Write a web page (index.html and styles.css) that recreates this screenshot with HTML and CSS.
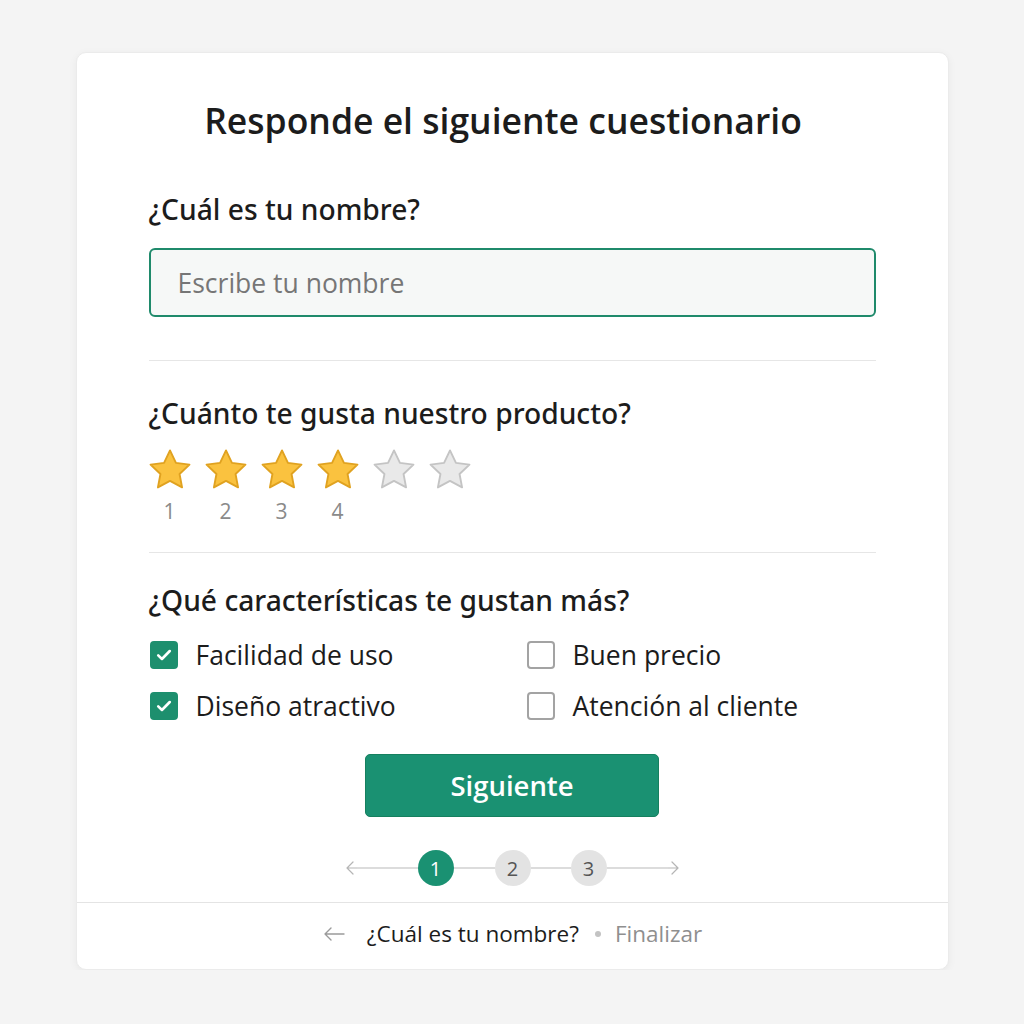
FILE: index.html
```html
<!DOCTYPE html>
<html lang="es">
<head>
<meta charset="utf-8">
<link rel="stylesheet" href="styles.css">
</head>
<body>
<div class="card">
  <div class="content">
    <h1 class="title">Responde el siguiente cuestionario</h1>

    <h2 class="question q1">¿Cuál es tu nombre?</h2>
    <div class="input">Escribe tu nombre</div>

    <div class="divider d1"></div>

    <h2 class="question q2">¿Cuánto te gusta nuestro producto?</h2>
    <div class="stars">
      <div class="star-item">
        <svg class="star on" viewBox="0 0 24 24"><path d="M12 2.6l2.85 5.95 6.5.85-4.77 4.5 1.22 6.45L12 17.2l-5.8 3.15 1.22-6.45L2.65 9.4l6.5-.85z"/></svg>
        <span class="num">1</span>
      </div>
      <div class="star-item">
        <svg class="star on" viewBox="0 0 24 24"><path d="M12 2.6l2.85 5.95 6.5.85-4.77 4.5 1.22 6.45L12 17.2l-5.8 3.15 1.22-6.45L2.65 9.4l6.5-.85z"/></svg>
        <span class="num">2</span>
      </div>
      <div class="star-item">
        <svg class="star on" viewBox="0 0 24 24"><path d="M12 2.6l2.85 5.95 6.5.85-4.77 4.5 1.22 6.45L12 17.2l-5.8 3.15 1.22-6.45L2.65 9.4l6.5-.85z"/></svg>
        <span class="num">3</span>
      </div>
      <div class="star-item">
        <svg class="star on" viewBox="0 0 24 24"><path d="M12 2.6l2.85 5.95 6.5.85-4.77 4.5 1.22 6.45L12 17.2l-5.8 3.15 1.22-6.45L2.65 9.4l6.5-.85z"/></svg>
        <span class="num">4</span>
      </div>
      <div class="star-item">
        <svg class="star off" viewBox="0 0 24 24"><path d="M12 2.6l2.85 5.95 6.5.85-4.77 4.5 1.22 6.45L12 17.2l-5.8 3.15 1.22-6.45L2.65 9.4l6.5-.85z"/></svg>
        <span class="num"></span>
      </div>
      <div class="star-item">
        <svg class="star off" viewBox="0 0 24 24"><path d="M12 2.6l2.85 5.95 6.5.85-4.77 4.5 1.22 6.45L12 17.2l-5.8 3.15 1.22-6.45L2.65 9.4l6.5-.85z"/></svg>
        <span class="num"></span>
      </div>
    </div>

    <div class="divider d2"></div>

    <h2 class="question q3">¿Qué características te gustan más?</h2>
    <div class="options">
      <div class="option">
        <span class="box checked"><svg viewBox="0 0 16 16"><path d="M3.8 8.3l2.7 2.6 5.7-5.8"/></svg></span>
        <span class="label">Facilidad de uso</span>
      </div>
      <div class="option">
        <span class="box"></span>
        <span class="label">Buen precio</span>
      </div>
      <div class="option">
        <span class="box checked"><svg viewBox="0 0 16 16"><path d="M3.8 8.3l2.7 2.6 5.7-5.8"/></svg></span>
        <span class="label">Diseño atractivo</span>
      </div>
      <div class="option">
        <span class="box"></span>
        <span class="label">Atención al cliente</span>
      </div>
    </div>

    <div class="button-row">
      <button class="btn">Siguiente</button>
    </div>

    <div class="stepper">
      <svg class="chev" viewBox="0 0 12 20"><path d="M8 4L2 10l6 6M2 10h10"/></svg>
      <span class="seg s1"></span>
      <span class="step active">1</span>
      <span class="seg s2"></span>
      <span class="step">2</span>
      <span class="seg s3"></span>
      <span class="step">3</span>
      <span class="seg s4"></span>
      <svg class="chev" viewBox="0 0 12 20"><path d="M4 4l6 6-6 6M0 10h10"/></svg>
    </div>
  </div>

  <div class="footer">
    <svg class="back" viewBox="0 0 24 16"><path d="M22 8H3M9 2L3 8l6 6"/></svg>
    <span class="current">¿Cuál es tu nombre?</span>
    <span class="dot"></span>
    <span class="next">Finalizar</span>
  </div>
</div>
</body>
</html>
```

FILE: styles.css
```css
* { box-sizing: border-box; }

html, body {
  margin: 0;
  padding: 0;
  background: #f4f4f4;
  font-family: "Open Sans", "Noto Sans", "Liberation Sans", sans-serif;
  color: #1b1b1b;
}

.card {
  width: 873px;
  margin: 52px auto 0;
  background: #ffffff;
  border-radius: 10px;
  border: 1px solid #ebebeb;
  box-shadow: 0 2px 8px rgba(0, 0, 0, 0.05);
  overflow: hidden;
}

.content {
  padding: 0 72px;
}

.title {
  margin: 45px 0 0;
  padding-right: 18px;
  font-size: 35.5px;
  line-height: 44px;
  font-weight: 600;
  text-align: center;
  color: #1c1c1c;
}

.question {
  margin: 0;
  font-family: "Noto Sans", "Open Sans", sans-serif;
  font-size: 28.2px;
  line-height: 32px;
  font-weight: 500;
  color: #1c1c1c;
}

.q1 { margin-top: 51px; }

.input {
  margin-top: 23px;
  height: 69px;
  border: 2px solid #1f8a6b;
  border-radius: 6px;
  background: #f6f8f7;
  padding: 0 27px;
  display: flex;
  align-items: center;
  font-size: 26.5px;
  color: #767676;
}

.divider {
  height: 1px;
  background: #e6e6e6;
}

.d1 { margin-top: 43px; }
.q2 { margin-top: 36px; }

.stars {
  margin-top: 16px;
  display: flex;
  gap: 10px;
}

.star-item {
  width: 46px;
  display: flex;
  flex-direction: column;
  align-items: center;
}

.star {
  width: 50px;
  height: 50px;
  margin-left: -4px;
}

.star path {
  stroke-width: 0.9;
  stroke-linejoin: round;
}

.star.on path {
  fill: #fac23f;
  stroke: #e0a220;
}

.star.off path {
  fill: #e9e9e9;
  stroke: #c4c4c4;
}

.num {
  height: 24px;
  margin-top: 4px;
  margin-left: -4px;
  font-size: 21px;
  line-height: 24px;
  color: #8a8a8a;
}

.d2 { margin-top: 29px; }
.q3 { margin-top: 31px; }

.options {
  margin-top: 23px;
  display: grid;
  grid-template-columns: 377px 1fr;
  row-gap: 19px;
}

.option {
  display: flex;
  align-items: center;
  height: 32px;
}

.box {
  width: 28px;
  height: 28px;
  border-radius: 4px;
  border: 2px solid #a3a3a3;
  background: #fff;
  margin-left: 1px;
  margin-right: 18px;
  display: flex;
  align-items: center;
  justify-content: center;
}

.box.checked {
  background: #1d8f6e;
  border-color: #1d8f6e;
}

.box svg {
  width: 22px;
  height: 22px;
}

.box svg path {
  fill: none;
  stroke: #ffffff;
  stroke-width: 1.9;
  stroke-linecap: round;
  stroke-linejoin: round;
}

.label {
  font-size: 26.5px;
  line-height: 32px;
  color: #1c1c1c;
}

.button-row {
  margin-top: 32px;
  display: flex;
  justify-content: center;
}

.btn {
  width: 294px;
  height: 63px;
  border: 1px solid #16805f;
  border-radius: 5px;
  background: #1a9172;
  color: #ffffff;
  font-family: "Open Sans", "Noto Sans", sans-serif;
  font-size: 27.5px;
  font-weight: 600;
  cursor: pointer;
}

.stepper {
  margin-top: 33px;
  height: 36px;
  display: flex;
  align-items: center;
  justify-content: center;
}

.chev {
  width: 12px;
  height: 20px;
}

.chev path {
  fill: none;
  stroke: #b5b5b5;
  stroke-width: 1.2;
  stroke-linecap: round;
  stroke-linejoin: round;
}

.seg {
  height: 1.5px;
  background: #dcdcdc;
}

.s1 { width: 61px; }
.s2 { width: 41px; }
.s3 { width: 40px; }
.s4 { width: 61px; }

.step {
  width: 36px;
  height: 36px;
  border-radius: 50%;
  background: #e3e3e3;
  color: #555;
  font-size: 20px;
  display: flex;
  align-items: center;
  justify-content: center;
}

.step.active {
  background: #1a9172;
  color: #ffffff;
}

.footer {
  margin-top: 16px;
  height: 67px;
  padding-bottom: 5px;
  border-top: 1px solid #e4e4e4;
  display: flex;
  align-items: center;
  justify-content: center;
  font-size: 22.5px;
}

.back {
  width: 24px;
  height: 16px;
  margin-right: 21px;
}

.back path {
  fill: none;
  stroke: #9b9b9b;
  stroke-width: 1.4;
  stroke-linecap: round;
  stroke-linejoin: round;
}

.current {
  color: #1c1c1c;
}

.dot {
  width: 6px;
  height: 6px;
  border-radius: 50%;
  background: #c3c3c3;
  margin: 0 14px 0 16px;
}

.next {
  color: #8f8f8f;
}
```
